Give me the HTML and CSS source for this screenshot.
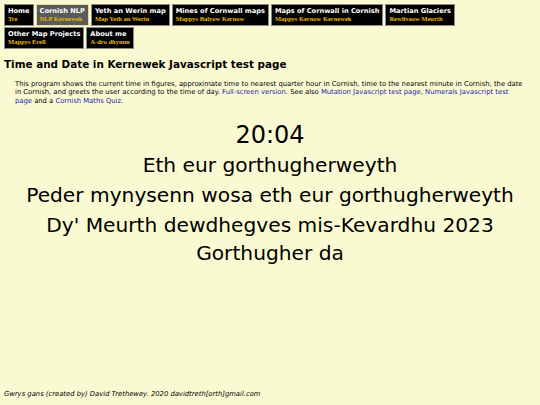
FILE: index.html
```html
<!DOCTYPE html>
<html>
<head>
<meta charset="utf-8">
<link rel="stylesheet" href="styles.css">
</head>
<body>
<nav class="nav">
  <a class="btn" href="#"><span class="t">Home</span><span class="s">Tre</span></a>
  <a class="btn cur" href="#"><span class="t">Cornish NLP</span><span class="s">NLP Kernewek</span></a>
  <a class="btn" href="#"><span class="t">Yeth an Werin map</span><span class="s">Map Yeth an Werin</span></a>
  <a class="btn" href="#"><span class="t">Mines of Cornwall maps</span><span class="s">Mappys Balyow Kernow</span></a>
  <a class="btn" href="#"><span class="t">Maps of Cornwall in Cornish</span><span class="s">Mappys Kernow Kernewek</span></a>
  <a class="btn" href="#"><span class="t">Martian Glaciers</span><span class="s">Rewlivaow Meurth</span></a>
  <a class="btn" href="#"><span class="t">Other Map Projects</span><span class="s">Mappys Erell</span></a>
  <a class="btn" href="#"><span class="t">About me</span><span class="s">A-dro dhymm</span></a>
</nav>
<h1 class="title">Time and Date in Kernewek Javascript test page</h1>
<p class="intro">This program shows the current time in figures, approximate time to nearest quarter hour in Cornish, time to the nearest minute in Cornish, the date in Cornish, and greets the user according to the time of day. <a href="#">Full-screen version</a>. See also <a href="#">Mutation Javascript test page</a>, <a href="#">Numerals Javascript test page</a> and a <a href="#">Cornish Maths Quiz</a>.</p>
<main class="clock">
  <div class="time">20:04</div>
  <div class="line">Eth eur gorthugherweyth</div>
  <div class="line">Peder mynysenn wosa eth eur gorthugherweyth</div>
  <div class="line">Dy' Meurth dewdhegves mis-Kevardhu 2023</div>
  <div class="line">Gorthugher da</div>
</main>
<footer class="foot">Gwrys gans (created by) David Trethewey. 2020 davidtreth[orth]gmail.com</footer>
</body>
</html>
```
FILE: styles.css
```css
html, body {
  margin: 0;
  padding: 0;
}
body {
  background: #fafad2;
  font-family: "DejaVu Sans", Verdana, sans-serif;
  color: #000;
  padding: 4px 4px 0 4px;
  height: 405px;
  box-sizing: border-box;
  display: flex;
  flex-direction: column;
}
.nav {
  display: flex;
  flex-wrap: wrap;
  gap: 1px 2px;
  width: 470px;
}
.btn {
  display: flex;
  flex-direction: column;
  background: #000;
  border: 1px solid #8a8a8a;
  padding: 2px 3px 2px 3px;
  text-decoration: none;
  height: 22px;
  box-sizing: border-box;
  justify-content: center;
}
.btn.cur {
  background: #5a5a5a;
  border-color: #e6dc9a;
}
.btn .t {
  color: #fff;
  font-weight: bold;
  font-size: 6.65px;
  line-height: 8px;
}
.btn .s {
  color: #e8b800;
  font-family: "Liberation Serif", "Times New Roman", serif;
  font-weight: bold;
  font-size: 6.5px;
  line-height: 8px;
}
.title {
  font-size: 10.4px;
  font-weight: bold;
  margin: 9px 0 0 0;
  line-height: 13px;
}
.intro {
  font-size: 6.8px;
  line-height: 8.4px;
  margin: 9px 0 0 11px;
  padding-right: 11px;
}
.intro a {
  color: #2222aa;
  text-decoration: none;
}
.clock {
  text-align: center;
  margin-top: 15px;
}
.time {
  font-size: 24px;
  line-height: 30px;
}
.line {
  font-size: 20.2px;
  line-height: 30px;
}
.line:last-child {
  line-height: 27px;
}
.foot {
  margin-top: auto;
  font-size: 6.8px;
  font-style: italic;
  line-height: 8px;
  margin-bottom: 7px;
}
```
